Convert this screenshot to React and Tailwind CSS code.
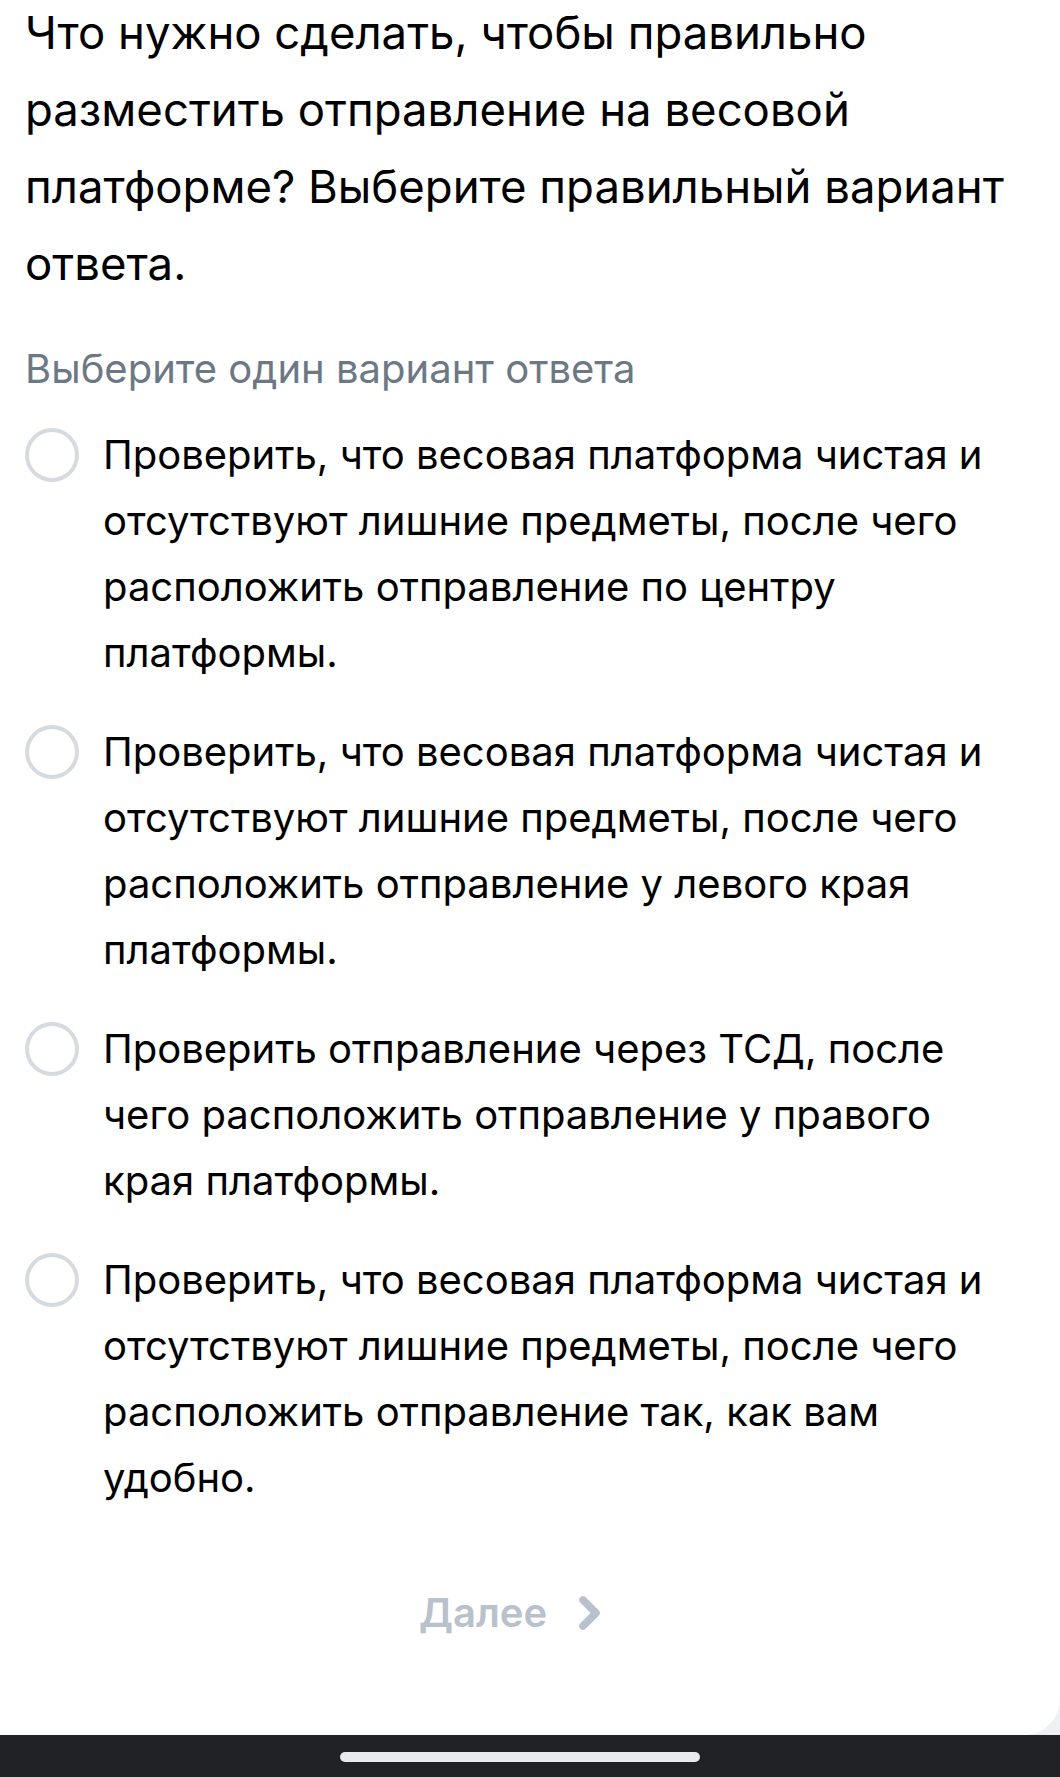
import React, { useState } from 'react';

const options = [
  'Проверить, что весовая платформа чистая и отсутствуют лишние предметы, после чего расположить отправление по центру платформы.',
  'Проверить, что весовая платформа чистая и отсутствуют лишние предметы, после чего расположить отправление у левого края платформы.',
  'Проверить отправление через ТСД, после чего расположить отправление у правого края платформы.',
  'Проверить, что весовая платформа чистая и отсутствуют лишние предметы, после чего расположить отправление так, как вам удобно.',
];

function Radio({ checked }) {
  return (
    <span
      className={
        checked
          ? 'mt-[6px] block h-[54px] w-[54px] shrink-0 rounded-full border-[15px] border-[#2787f5]'
          : 'mt-[6px] block h-[54px] w-[54px] shrink-0 rounded-full border-[4px] border-[#d5dbe1]'
      }
    />
  );
}

export default function App() {
  const [selected, setSelected] = useState(null);

  return (
    <div className="flex h-[1777px] w-full flex-col overflow-hidden bg-[#eef1f4] font-['Inter','Noto_Sans',sans-serif]">
      <div className="flex flex-1 flex-col rounded-br-[36px] bg-white px-[25px]">
        <h1 className="-mt-[6px] text-[45.5px] font-normal leading-[77px] text-black">
          Что нужно сделать, чтобы правильно разместить отправление на весовой платформе? Выберите правильный вариант ответа.
        </h1>

        <p className="mt-[42px] text-[40px] leading-[50px] text-[#6d7885]">
          Выберите один вариант ответа
        </p>

        <div className="mt-[28px] flex flex-col gap-[33px]">
          {options.map((text, i) => (
            <label
              key={i}
              className="flex cursor-pointer items-start gap-[24px]"
              onClick={() => setSelected(i)}
            >
              <Radio checked={selected === i} />
              <span className="max-w-[905px] text-[40px] leading-[66px] text-black">{text}</span>
            </label>
          ))}
        </div>

        <div className="mt-[72px] flex justify-center pr-[38px]">
          <button
            className={
              selected === null
                ? 'flex items-center gap-[30px] text-[40px] font-semibold text-[#b8c1cc]'
                : 'flex items-center gap-[30px] text-[40px] font-semibold text-[#2787f5]'
            }
          >
            Далее
            <svg width="26" height="36" viewBox="0 0 26 36" fill="none">
              <path
                d="M6 5l13 13L6 31"
                stroke="currentColor"
                strokeWidth="7.5"
                strokeLinecap="round"
                strokeLinejoin="round"
              />
            </svg>
          </button>
        </div>
      </div>

      <div className="flex h-[42px] shrink-0 justify-center bg-[#1f2125] pr-[20px] pt-[17px]">
        <div className="h-[10px] w-[360px] rounded-full bg-[#e8eaed]" />
      </div>
    </div>
  );
}
